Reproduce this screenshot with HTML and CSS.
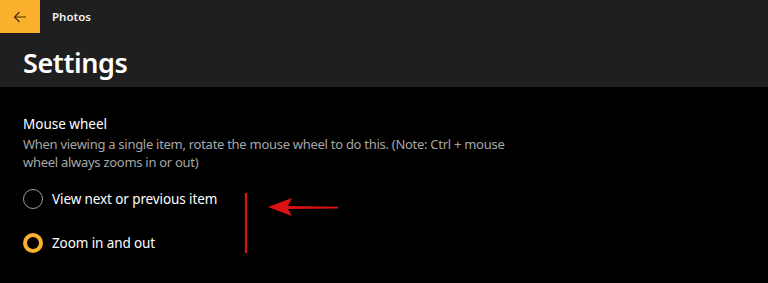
FILE: index.html
```html
<!DOCTYPE html>
<html>
<head>
<meta charset="utf-8">
<link rel="stylesheet" href="styles.css">
</head>
<body>
<div class="header">
  <div class="titlebar">
    <div class="back">
      <svg width="14" height="14" viewBox="0 0 14 14"><path d="M13 7H1.5M6.5 2L1.5 7l5 5" fill="none" stroke="#4a3000" stroke-width="1.2"/></svg>
    </div>
    <div class="app">Photos</div>
  </div>
  <h1 class="title">Settings</h1>
</div>
<div class="content">
  <div class="label">Mouse wheel</div>
  <div class="desc">When viewing a single item, rotate the mouse wheel to do this. (Note: Ctrl + mouse wheel always zooms in or out)</div>
  <div class="options">
    <div class="option"><span class="radio"></span><span>View next or previous item</span></div>
    <div class="option"><span class="radio on"></span><span>Zoom in and out</span></div>
  </div>
  <svg class="annot" width="120" height="70" viewBox="0 0 120 70">
    <line x1="16" y1="3" x2="16" y2="63" stroke="#dc1212" stroke-width="2.2"/>
    <path d="M108 16.8 L58 16 L62 8 L38 17 L62 26 L58 19 L108 18.6 Z" fill="#dc1212"/>
  </svg>
</div>
</body>
</html>
```
FILE: styles.css
```css
html, body { margin: 0; padding: 0; }
body {
  background: #000;
  width: 768px;
  height: 283px;
  overflow: hidden;
  font-family: "Noto Sans", "Open Sans", sans-serif;
  color: #fff;
}
.header {
  background: #1f1f1f;
  height: 87px;
}
.titlebar {
  display: flex;
  align-items: center;
  height: 33px;
}
.back {
  width: 40px;
  height: 33px;
  background: #fbb12e;
  display: flex;
  align-items: center;
  justify-content: center;
}
.app {
  font-size: 11.5px;
  font-weight: 600;
  margin-left: 12px;
  color: #f2f2f2;
}
.title {
  margin: 10px 0 0 23px;
  font-size: 27px;
  font-weight: 600;
  line-height: 40px;
  letter-spacing: -0.4px;
}
.content {
  position: relative;
  padding: 27px 23px 0;
}
.label {
  font-size: 13.5px;
  line-height: 20px;
  color: #fff;
}
.desc {
  font-size: 13px;
  line-height: 18px;
  letter-spacing: -0.28px;
  color: #a6a6a6;
  width: 500px;
  margin-top: 1px;
}
.options {
  margin-top: 18px;
  display: flex;
  flex-direction: column;
  gap: 24px;
}
.option {
  display: flex;
  align-items: center;
  font-size: 13.5px;
  letter-spacing: -0.1px;
  color: #fff;
  height: 20px;
}
.radio {
  width: 20px;
  height: 20px;
  box-sizing: border-box;
  border: 1px solid #9a9a9a;
  border-radius: 50%;
  margin-right: 9px;
}
.radio.on {
  border: 4px solid #fbb12e;
}
.annot {
  position: absolute;
  left: 230px;
  top: 103px;
}
```
